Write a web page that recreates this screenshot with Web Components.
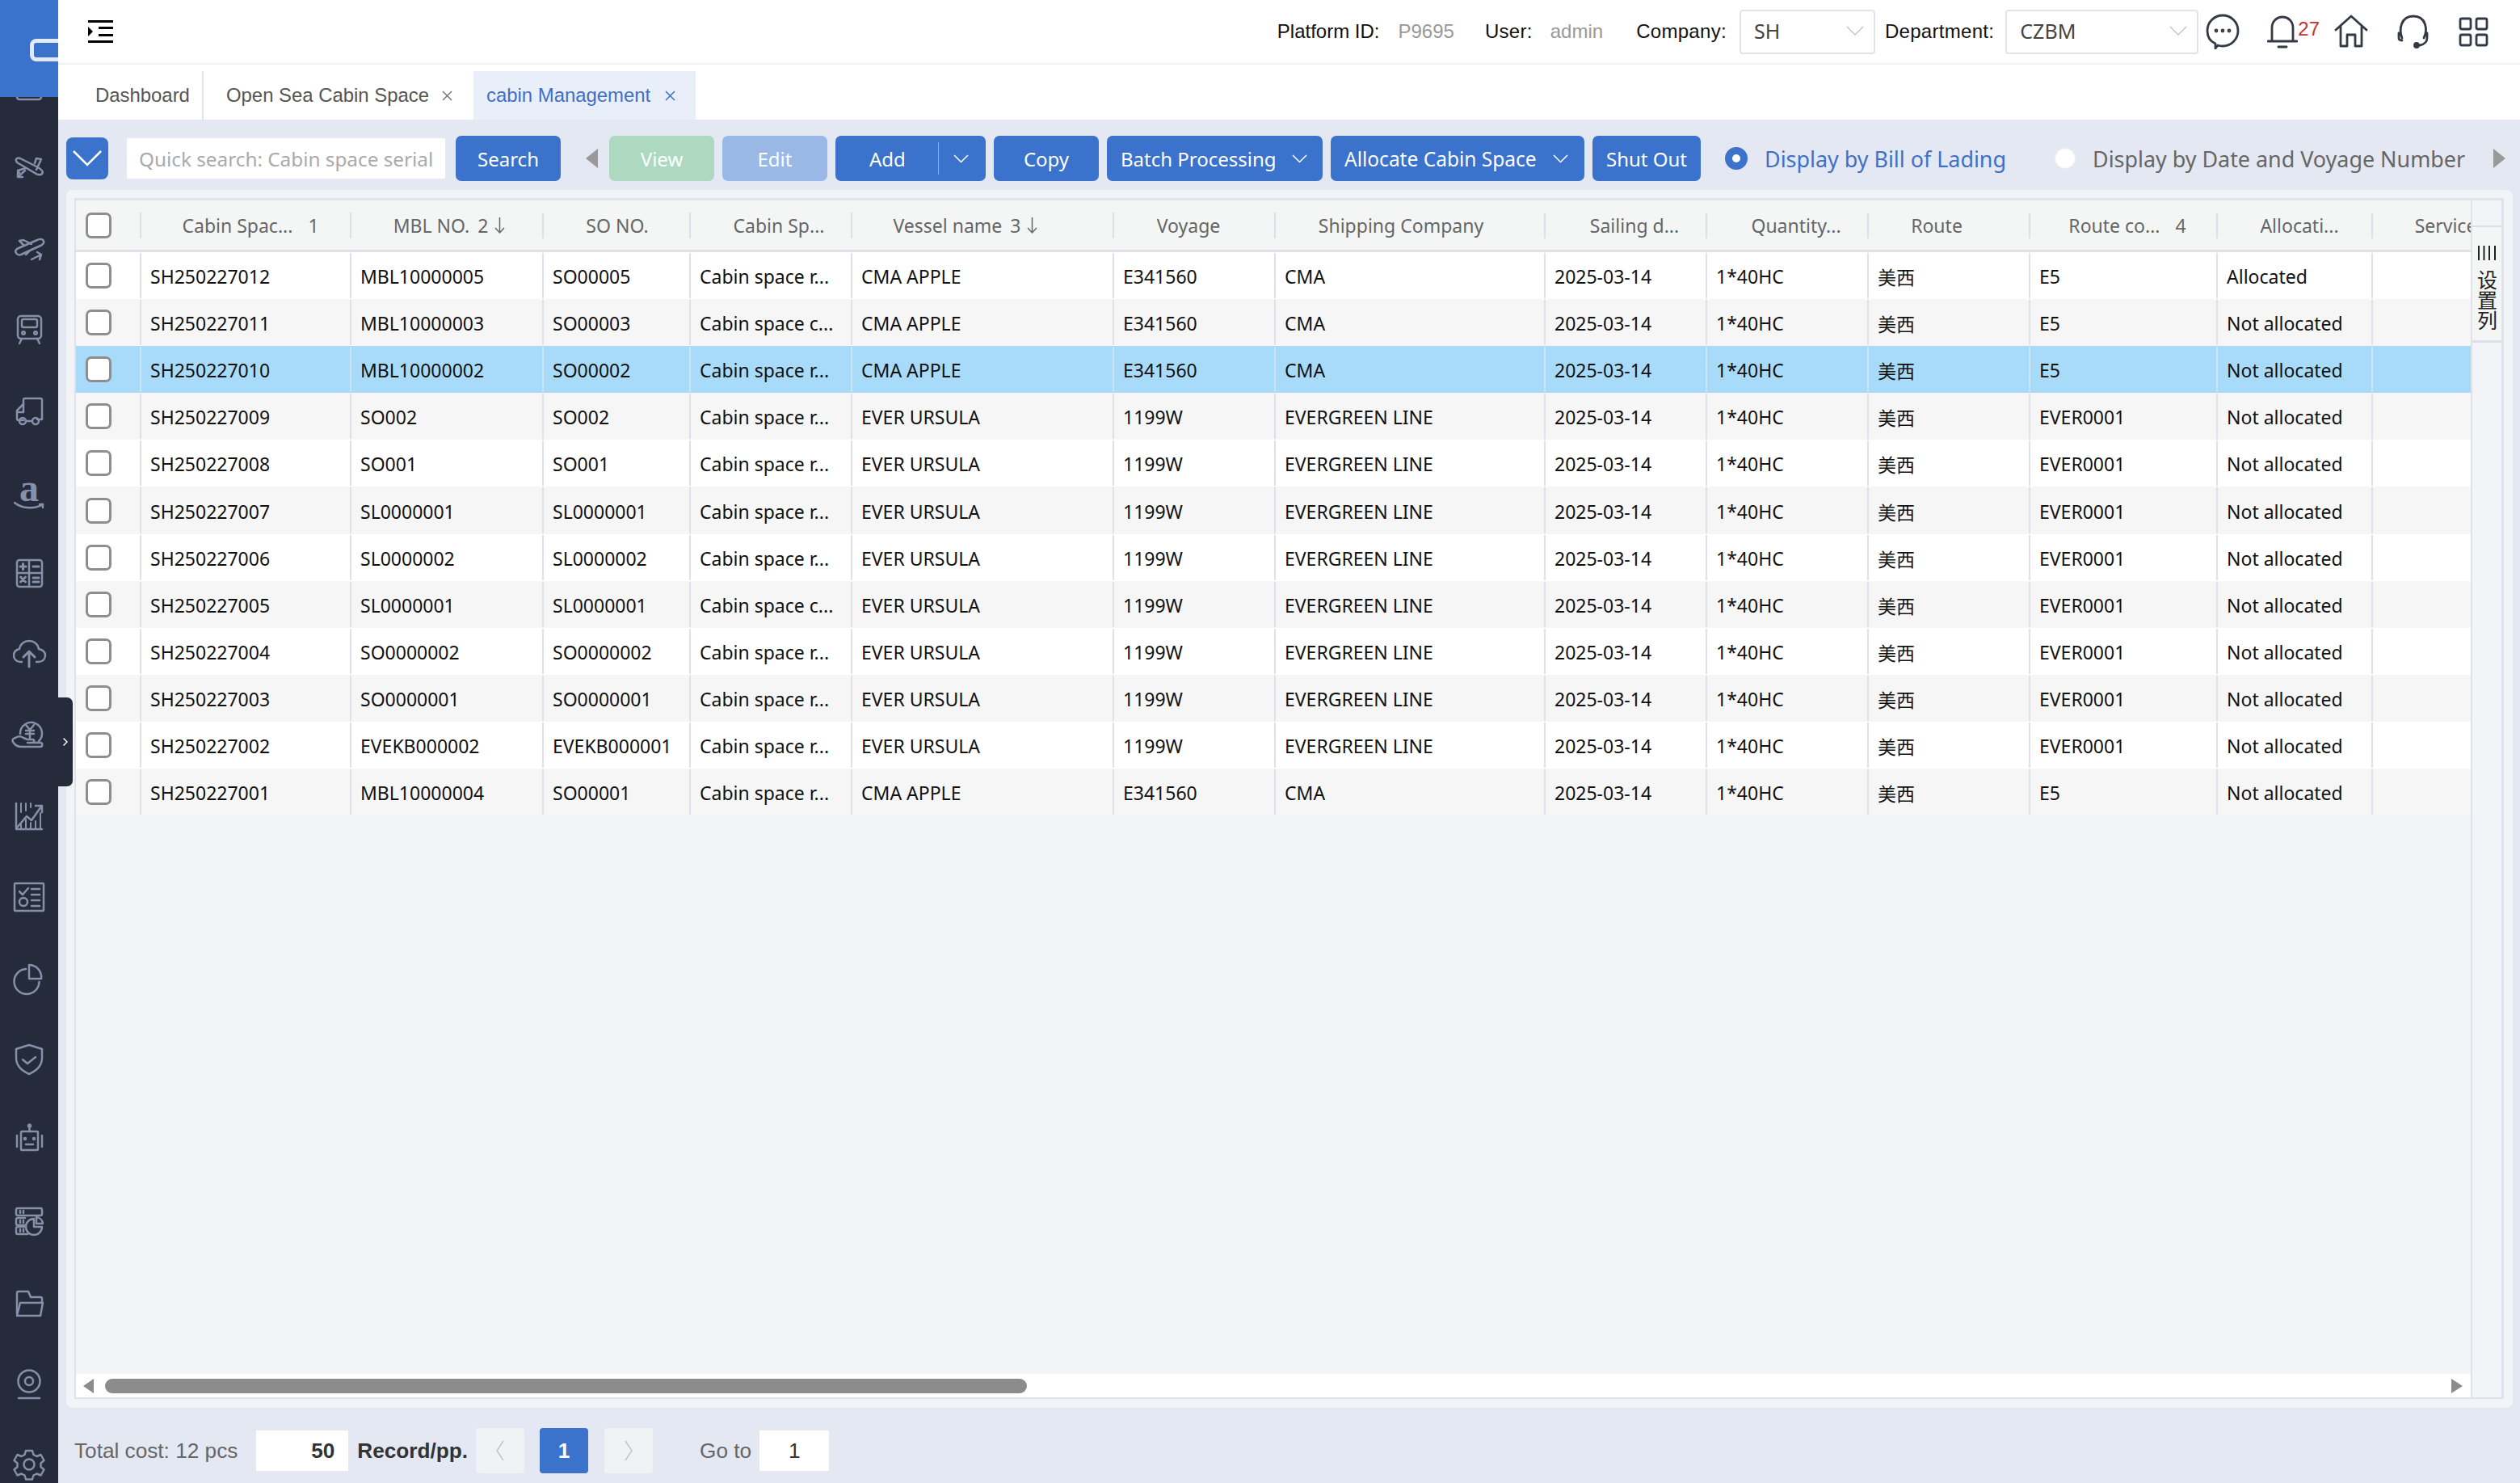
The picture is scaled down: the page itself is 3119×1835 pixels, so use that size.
<!DOCTYPE html>
<html>
<head>
<meta charset="utf-8">
<title>cabin Management</title>
<style>
html, body { margin: 0; height: 100%; overflow: hidden; }
body { font-family: "Noto Sans", "Noto Sans CJK SC", sans-serif; background: #e4e8f2; }
</style>
</head>
<body>
<app-shell>
    <side-nav slot="nav"></side-nav>
    <top-bar></top-bar>
    <tab-strip></tab-strip>
    <tool-bar></tool-bar>
    <data-grid></data-grid>
    <pager-bar></pager-bar>
</app-shell>

<script>
const ICONS = {
    box: '<rect x="9" y="14" width="30" height="26" rx="3"/><path d="M9 32h30"/>',
    planeBack: '<path d="M8 16c-1-3 2-4 5-3l22 11c5 3 7 6 5 8s-6 1-9-1l-22-13z"/><path d="M31 19l2-6 6 1-6 13M20 25l-10 3 2 3"/><path d="M10 36l9-8M10 36v-6M10 36h6"/>',
    planeOut: '<path d="M8 29c-2-2 0-5 3-6l23-10c4-2 7-1 8 1s-1 5-4 6l-24 11c-2 1-5 0-6-2z"/><path d="M17 19l-5-5 5-1 10 5M24 27l-4 4"/><path d="M27 37l12-6M39 31l-5-3M39 31l-2 6"/>',
    train: '<rect x="10" y="7" width="29" height="28" rx="4"/><rect x="15" y="11" width="19" height="10" rx="2"/><circle cx="17" cy="28" r="1.800"/><circle cx="32" cy="28" r="1.800"/><path d="M15 35l-3 6M34 35l3 6"/>',
    truck: '<path d="M17 36h-6a2 2 0 0 1-2-2v-10l8-8v-5a2 2 0 0 1 2-2h19a2 2 0 0 1 2 2v24h-6"/><path d="M9 26h8v-10"/><circle cx="16" cy="37" r="4"/><circle cx="32" cy="37" r="4"/><path d="M20 37h8"/>',
    calc: '<rect x="9" y="8" width="31" height="33" rx="3"/><path d="M24 8v33M9 24h31"/><path d="M13 16h7M16.500 12.500v7M29 16h7M13.500 29l6 6M19.500 29l-6 6M29 30h7M29 35h7" stroke-width="3"/>',
    cloud: '<path d="M15 34h-2c-5 0-8-4-8-8 0-4 3-7 7-8 1-6 6-10 12-10 6 0 11 4 12 10 5 1 8 4 8 8s-3 8-8 8h-3"/><path d="M24 40v-18M17 28l7-7 7 7" stroke-width="3"/>',
    yen: '<path d="M13 22a13.500 13.500 0 1 1 23 9"/><path d="M20 11l5 6 5-6M20 18h10M20 22h10M25 17v11"/><path d="M7 27c3-2 7-2 10 0l5 2h6c3 0 3 4 0 4h-6 16c3 0 3 5 0 5h-24c-5 0-8-3-10-6-1-2-1-4 3-5z"/>',
    chart: '<path d="M8 8v32h32"/><path d="M14 8v11M20 8v9M26 8v5M32 30v10M38 20v20M14 32v8M20 28v12M26 32v8" stroke-width="2"/><path d="M9 38l12-14 6 5 12-17M32 11h8v8"/>',
    list: '<rect x="6" y="7" width="36" height="34" rx="1"/><path d="M12 17l4 4 7-8M27 14h10M27 21h10M27 28h10M27 35h10"/><circle cx="17" cy="30" r="5"/>',
    pie: '<path d="M20 13a15.500 15.500 0 1 0 16.500 16"/><path d="M24 8a15 15 0 0 1 15 17h-15z"/>',
    shield: '<path d="M24 6l16 5v11c0 10-7 16-16 20-9-4-16-10-16-20v-11z"/><path d="M16 24l6 5 10-8"/>',
    robot: '<rect x="14" y="13" width="21" height="23" rx="1"/><path d="M24.500 6v7M9 18v14M40 18v14M20 29h9"/><circle cx="24.500" cy="6" r="1.500"/><circle cx="19" cy="22" r="1"/><circle cx="30" cy="22" r="1"/>',
    server: '<rect x="8" y="8" width="32" height="9" rx="2"/><path d="M19 20h-9a2 2 0 0 0-2 2v5a2 2 0 0 0 2 2h8M18 31h-8a2 2 0 0 0-2 2v5a2 2 0 0 0 2 2h12M13 11v3M17 11v3M13 23v3M17 23v3M13 34v3M17 34v3"/><path d="M30 21a10 10 0 1 0 10 10h-10z"/><path d="M33 19a9 9 0 0 1 8 8h-8z"/>',
    folder: '<path d="M9 38v-26a2 2 0 0 1 2-2h12l3 7h12a2 2 0 0 1 2 2v4"/><path d="M9 40l4-16h28l-3 16z"/>',
    cam: '<circle cx="24" cy="21" r="13.500"/><circle cx="24" cy="21" r="5"/><path d="M11 42h26"/>',
    gear: '<path d="M20 7h8l1.500 5 4 2 5-2 4 7-4 3.500v4.500l4 3.500-4 7-5-2-4 2-1.500 5h-8l-1.500-5-4-2-5 2-4-7 4-3.500v-4.500l-4-3.500 4-7 5 2 4-2z"/><circle cx="24" cy="24" r="6.500"/>'
};

// the amazon letter stays real text, so it is built apart from the others
const NAV = ['box', 'planeBack', 'planeOut', 'train', 'truck', 'amazon', 'calc', 'cloud', 'yen', 'chart', 'list', 'pie', 'shield', 'robot', 'server', 'folder', 'cam', 'gear'];

const COLUMNS = [260, 238, 182, 200, 324, 200, 334, 200, 200, 200, 232, 192, 200];
const GRID_TEMPLATE = '79px ' + COLUMNS.map(w => w + 'px').join(' ');

// label, order number, sorted, shift of the label off the centre of its cell
const HEADERS = [
    ['Cabin Spac...', '1', false, 7], ['MBL NO.', '2', true, 4], ['SO NO.', '', false, 2], ['Cabin Sp...', '', false, 11], ['Vessel name', '3', true, -20],
    ['Voyage', '', false, -6], ['Shipping Company', '', false, -10], ['Sailing d...', '', false, 12], ['Quantity...', '', false, 12], ['Route', '', false, -14], ['Route co...', '4', false, 6], ['Allocati...', '', false, 7], ['Service', '', false, -8]
];

const apple = ['CMA APPLE', 'E341560', 'CMA'];
const ursula = ['EVER URSULA', '1199W', 'EVERGREEN LINE'];
const RESERVED = 'Cabin space r...';
const OTHER = 'Cabin space c...';
const ROWS = [
    ['SH250227012', 'MBL10000005', 'SO00005', RESERVED, apple, 'E5', 'Allocated'],
    ['SH250227011', 'MBL10000003', 'SO00003', OTHER, apple, 'E5', 'Not allocated'],
    ['SH250227010', 'MBL10000002', 'SO00002', RESERVED, apple, 'E5', 'Not allocated'],
    ['SH250227009', 'SO002', 'SO002', RESERVED, ursula, 'EVER0001', 'Not allocated'],
    ['SH250227008', 'SO001', 'SO001', RESERVED, ursula, 'EVER0001', 'Not allocated'],
    ['SH250227007', 'SL0000001', 'SL0000001', RESERVED, ursula, 'EVER0001', 'Not allocated'],
    ['SH250227006', 'SL0000002', 'SL0000002', RESERVED, ursula, 'EVER0001', 'Not allocated'],
    ['SH250227005', 'SL0000001', 'SL0000001', OTHER, ursula, 'EVER0001', 'Not allocated'],
    ['SH250227004', 'SO0000002', 'SO0000002', RESERVED, ursula, 'EVER0001', 'Not allocated'],
    ['SH250227003', 'SO0000001', 'SO0000001', RESERVED, ursula, 'EVER0001', 'Not allocated'],
    ['SH250227002', 'EVEKB000002', 'EVEKB000001', RESERVED, ursula, 'EVER0001', 'Not allocated'],
    ['SH250227001', 'MBL10000004', 'SO00001', RESERVED, apple, 'E5', 'Not allocated']
];

class AppShell extends HTMLElement {
    constructor() {
        super();
        this.attachShadow({ mode: 'open' }).innerHTML = `
<style>
:host { display: flex; width: 3119px; height: 1835px; position: relative; overflow: hidden; }
.main { flex: 1; min-width: 0; display: flex; flex-direction: column; }
</style>
<slot name="nav"></slot>
<div class="main"><slot></slot></div>`;
    }
}

class SideNav extends HTMLElement {
    constructor() {
        super();
        const items = NAV.map(name => {
            if (name === 'amazon') {
                return `<div class="item"><span class="amazon">a<svg width="38" height="12" viewBox="0 0 38 12"><path d="M1 2c10 8 26 8 35 2M36 4l-4 0M36 4l0 4"/></svg></span></div>`;
            }
            return `<div class="item"><svg width="48" height="48" viewBox="0 0 48 48">${ICONS[name]}</svg></div>`;
        }).join('');
        this.attachShadow({ mode: 'open' }).innerHTML = `
<style>
:host { display: block; width: 72px; height: 100%; background: #252b3a; position: relative; flex: none; z-index: 2; }
.list { padding-top: 57px; }
.item { height: 100.300px; display: flex; align-items: center; justify-content: center; }
svg { fill: none; stroke: #8690a9; stroke-width: 2.500; stroke-linecap: round; stroke-linejoin: round; }
.amazon { position: relative; font: bold 48px/44px "Liberation Serif", serif; color: #8690a9; display: block; width: 38px; height: 48px; text-align: center; margin-top: -6px; }
.amazon svg { position: absolute; left: 0; top: 38px; }
.logo { position: absolute; left: 0; top: 0; width: 72px; height: 120px; background: #3b72cc; overflow: hidden; }
.logo i { position: absolute; left: 37px; top: 48px; width: 50px; height: 28px; border: 5px solid #e3eaf7; border-radius: 8px; box-sizing: border-box; }
.fold { position: absolute; left: 72px; top: 863px; width: 18px; height: 110px; background: #252b3a; border-radius: 0 7px 7px 0; display: flex; align-items: center; justify-content: center; }
.fold svg { stroke: #fff; stroke-width: 1.500; }
</style>
<div class="list">${items}</div>
<div class="logo"><i></i></div>
<div class="fold"><svg width="8" height="12" viewBox="0 0 8 12"><path d="M2 2l4 4-4 4"/></svg></div>`;
    }
}

class UiSelect extends HTMLElement {
    constructor() {
        super();
        this.attachShadow({ mode: 'open' }).innerHTML = `
<style>
:host { display: flex; align-items: center; height: 55px; box-sizing: border-box; border: 2px solid #e3e4e8; border-radius: 4px; background: #fff; padding: 0 12px 2px 16px; color: #444; font-size: 25px; justify-content: space-between; }
svg { fill: none; stroke: #c4c6cc; stroke-width: 1.500; }
</style>
<slot></slot>
<svg width="22" height="12" viewBox="0 0 22 12"><path d="M1 1l10 10 10-10"/></svg>`;
    }
}

class TopBar extends HTMLElement {
    constructor() {
        super();
        this.attachShadow({ mode: 'open' }).innerHTML = `
<style>
:host { display: flex; align-items: center; height: 80px; box-sizing: border-box; border-bottom: 2px solid #f0f0f2; background: #fff; flex: none; font: 24px "Liberation Sans", sans-serif; color: #111; padding-right: 39px; }
.menu { margin-left: 37px; margin-right: auto; display: block; }
.lab { white-space: nowrap; letter-spacing: .3px; }
.val { color: #999; white-space: nowrap; }
ui-select { font-family: "Noto Sans", sans-serif; }
.ico { fill: none; stroke: #333a45; stroke-width: 2.800; stroke-linecap: round; stroke-linejoin: round; display: block; }
.count { color: #c9302c; font-size: 24px; margin-bottom: 6px; }
</style>
<svg class="menu" width="31" height="28" viewBox="0 0 31 28"><path d="M0 0h31v3h-31zM0 25h31v3h-31zM13 8h18v3h-18zM13 17h18v3h-18zM0 8l6 6-6 6z" fill="#000"/></svg>
<span class="lab" style="letter-spacing:0">Platform ID:</span>
<span class="val" style="margin-left:23px">P9695</span>
<span class="lab" style="margin-left:38px">User:</span>
<span class="val" style="margin-left:22px">admin</span>
<span class="lab" style="margin-left:41px">Company:</span>
<ui-select style="margin-left:16px;width:168px">SH</ui-select>
<span class="lab" style="margin-left:12px">Department:</span>
<ui-select style="margin-left:14px;width:239px">CZBM</ui-select>
<svg class="ico" style="margin-left:9px" width="42" height="44" viewBox="0 0 42 44"><path d="M12 37c-7-3-10-9-10-16a19 19 0 1 1 19 19c-2 0-4 0-6-1l-3 4z"/><circle cx="13" cy="21" r="1" /><circle cx="21" cy="21" r="1"/><circle cx="29" cy="21" r="1"/></svg>
<svg class="ico" style="margin-left:34px" width="38" height="42" viewBox="0 0 38 42"><path d="M6 32v-16a13 13 0 0 1 26 0v16M1 33h36M14 40h10"/></svg>
<span class="count">27</span>
<svg class="ico" style="margin-left:18px" width="42" height="44" viewBox="0 0 42 44"><path d="M2 20l19-17 19 17M8 16v24h8v-14h10v14h8v-24"/></svg>
<svg class="ico" style="margin-left:35px" width="42" height="44" viewBox="0 0 42 44"><path d="M7 30c-4-10-2-27 14-27s18 17 13 27M3 24v6c0 2 2 3 4 3M38 24v6c0 4-3 8-9 9"/><circle cx="25" cy="39" r="2.500" fill="#333a45"/></svg>
<svg class="ico" style="margin-left:35px" width="37" height="37" viewBox="0 0 37 37"><rect x="2" y="2" width="13" height="13" rx="2"/><rect x="22" y="2" width="13" height="13" rx="2"/><rect x="2" y="22" width="13" height="13" rx="2"/><rect x="22" y="22" width="13" height="13" rx="2"/></svg>`;
    }
}

class TabStrip extends HTMLElement {
    constructor() {
        super();
        const x = '<svg width="13" height="13" viewBox="0 0 13 13"><path d="M1 1l11 11M12 1l-11 11"/></svg>';
        this.attachShadow({ mode: 'open' }).innerHTML = `
<style>
:host { display: flex; height: 68px; box-sizing: border-box; padding-top: 8px; background: #fff; flex: none; font: 23.900px "Liberation Sans", sans-serif; color: #555; }
.tab { display: flex; align-items: center; height: 60px; white-space: nowrap; }
.home { width: 180px; padding-left: 46px; box-sizing: border-box; border-right: 2px solid #e3e4e8; }
.sea { width: 334px; padding-left: 28px; box-sizing: border-box; gap: 16px; }
.on { width: 275px; padding-left: 16px; box-sizing: border-box; gap: 18px; background: #e9eff9; color: #3f70c6; }
svg { fill: none; stroke: #777; stroke-width: 1.500; }
.on svg { stroke: #3f70c6; }
</style>
<div class="tab home">Dashboard</div>
<div class="tab sea">Open Sea Cabin Space${x}</div>
<div class="tab on">cabin Management${x}</div>`;
    }
}

class ToolButton extends HTMLElement {
    constructor() {
        super();
        this.attachShadow({ mode: 'open' }).innerHTML = `
<style>
:host { display: inline-flex; align-items: center; justify-content: center; height: 56px; box-sizing: border-box; border-radius: 7px; background: #3b72cc; color: #fff; font-size: 24px; flex: none; white-space: nowrap; }
:host([tone=green]) { background: #aed9c1; }
:host([tone=pale]) { background: #99b8e6; }
</style>
<slot></slot>`;
    }
}

class RadioOption extends HTMLElement {
    constructor() {
        super();
        this.attachShadow({ mode: 'open' }).innerHTML = `
<style>
:host { display: inline-flex; align-items: center; gap: 21px; color: #666; font-size: 26.900px; white-space: nowrap; flex: none; }
:host([on]) { color: #3f70c6; }
i { width: 26px; height: 26px; border-radius: 50%; background: #fff; box-sizing: border-box; border: 1px solid #eceef3; }
:host([on]) i { width: 28px; height: 28px; border: 9px solid #3b72cc; }
</style>
<i></i><slot></slot>`;
    }
}

class ToolBar extends HTMLElement {
    constructor() {
        super();
        const caret = '<svg class="caret" width="19" height="11" viewBox="0 0 19 11"><path d="M1 1l8.500 8.500 8.500-8.500"/></svg>';
        this.attachShadow({ mode: 'open' }).innerHTML = `
<style>
:host { display: block; height: 87px; box-sizing: border-box; padding: 20px 0 0 10px; background: #e4e8f2; flex: none; overflow: hidden; }
.row { display: flex; align-items: center; height: 56px; }
.fold { width: 52px; height: 52px; border-radius: 8px; background: #3b72cc; display: flex; align-items: center; justify-content: center; flex: none; }
.fold svg { fill: none; stroke: #fff; stroke-width: 2.500; }
.search { width: 396px; height: 52px; margin: 0 12px 0 22px; box-sizing: border-box; background: #fff; border: 1px solid #e8e9ee; border-radius: 3px; color: #aaa; font-size: 24.300px; display: flex; align-items: center; padding-left: 15px; flex: none; white-space: nowrap; overflow: hidden; }
.arrow { flex: none; fill: #999; display: block; }
.caret { fill: none; stroke: #fff; stroke-width: 1.500; }
tool-button { margin-right: 10px; }
.split { width: 1px; height: 40px; background: #8fb0e0; margin-left: 40px; margin-right: 18px; }
</style>
<div class="row">
    <div class="fold"><svg width="38" height="22" viewBox="0 0 38 22"><path d="M2 2l17 17 17-17"/></svg></div>
    <div class="search">Quick search: Cabin space serial</div>
    <tool-button style="width:130px;margin-right:31px">Search</tool-button>
    <svg class="arrow" style="margin-right:14px" width="15" height="24" viewBox="0 0 15 24"><path d="M15 0v24l-15-12z"/></svg>
    <tool-button style="width:130px" tone="green">View</tool-button>
    <tool-button style="width:130px" tone="pale">Edit</tool-button>
    <tool-button style="width:186px;padding-left:42px;justify-content:flex-start">Add<span class="split"></span>${caret}</tool-button>
    <tool-button style="width:130px">Copy</tool-button>
    <tool-button style="width:267px;padding-left:17px;justify-content:flex-start">Batch Processing<span style="width:19px"></span>${caret}</tool-button>
    <tool-button style="width:314px;padding-left:17px;justify-content:flex-start;font-size:24.500px">Allocate Cabin Space<span style="width:20px"></span>${caret}</tool-button>
    <tool-button style="width:134px;margin-right:30px">Shut Out</tool-button>
    <radio-option on style="margin-right:60px">Display by Bill of Lading</radio-option>
    <radio-option style="margin-right:35px">Display by Date and Voyage Number</radio-option>
    <svg class="arrow" width="15" height="24" viewBox="0 0 15 24"><path d="M0 0v24l15-12z"/></svg>
</div>`;
    }
}

class DataGrid extends HTMLElement {
    constructor() {
        super();
        const check = '<span class="check"></span>';
        const head = HEADERS.map(([label, num, sorted, shift]) => {
            const pad = shift > 0 ? `padding-left:${shift * 2}px` : `padding-right:${-shift * 2}px`;
            const order = num ? `<span class="${sorted ? 'num near' : 'num'}">${num}</span>` : '';
            const arrow = sorted ? '<svg class="sort" width="13" height="22" viewBox="0 0 13 22"><path d="M6.500 1v19M1 14l5.500 6 5.500-6"/></svg>' : '';
            return `<div class="th" style="${pad}"><span>${label}</span>${order}${arrow}</div>`;
        }).join('');
        const rows = ROWS.map((r, i) => {
            const cells = [r[0], r[1], r[2], r[3], r[4][0], r[4][1], r[4][2], '2025-03-14', '1*40HC', '美西', r[5], r[6], ''];
            const cls = i === 2 ? 'row picked' : (i % 2 ? 'row alt' : 'row');
            return `<div class="${cls}"><div class="box">${check}</div>${cells.map(c => `<div class="td">${c}</div>`).join('')}</div>`;
        }).join('');
        this.attachShadow({ mode: 'open' }).innerHTML = `
<style>
:host { display: block; flex: 1; min-height: 0; margin: 0 9px 0 10px; padding: 10px 11px 11px 10px; background: #f2f4f8; border-radius: 8px; }
.frame { display: flex; height: 100%; box-sizing: border-box; border: 3px solid #dfe2e8; border-left-width: 2px; border-bottom-width: 2px; }
.scroll { flex: none; width: 2964px; display: flex; flex-direction: column; overflow: hidden; }
.head, .row { display: grid; grid-template-columns: ${GRID_TEMPLATE}; flex: none; width: max-content; }
.head { height: 64px; box-sizing: border-box; border-bottom: 3px solid #dfe2e8; background: #f4f6f6; color: #666; }
.row { height: 58.100px; background: #fff; color: #111; --rule: #dfe1e6; }
.alt { background: #f6f6f7; }
.picked { background: #a8daf9; --rule: #cde3f3; }
.box { display: flex; align-items: center; padding-left: 12px; }
.check { display: block; width: 32px; height: 32px; box-sizing: border-box; border: 3px solid #8e8e8e; border-radius: 7px; background: #fff; }
.th { display: flex; align-items: center; justify-content: center; box-sizing: border-box; gap: 8px; white-space: nowrap; font-size: 23px; background: linear-gradient(#dcdfe4, #dcdfe4) 0 50% / 2px 32px no-repeat; overflow: hidden; }
.num { margin-left: 11px; }
.num.near { margin-left: 2px; }
.sort { fill: none; stroke: #666; stroke-width: 1.500; }
.td { display: flex; align-items: center; padding: 2px 0 0 13px; font-size: 23px; white-space: nowrap; overflow: hidden; background: linear-gradient(var(--rule), var(--rule)) 0 1px / 2px calc(100% - 2px) no-repeat; }
.fill { flex: 1; }
.bar { flex: none; height: 29px; background: #fff; position: relative; }
.bar .thumb { position: absolute; left: 36px; top: 6px; width: 1141px; height: 18px; border-radius: 9px; background: #8c8c8c; }
.bar svg { position: absolute; top: 6px; fill: #8c8c8c; }
.rail { flex: 1; border-left: 2px solid #dfe2e8; padding-top: 31px; }
.btn { height: 145px; box-sizing: border-box; border-top: 2px solid #dcdfe4; border-bottom: 3px solid #dcdfe4; display: flex; flex-direction: column; align-items: center; padding: 23px 0 0 0; background: #f4f6f6; color: #222; }
.words { writing-mode: vertical-rl; font-size: 25px; line-height: 25px; margin-top: 12px; font-family: "Noto Sans CJK SC", sans-serif; }
.bars { fill: #222; display: block; }
</style>
<div class="frame">
    <div class="scroll">
        <div class="head"><div class="box">${check}</div>${head}</div>
        ${rows}
        <div class="fill"></div>
        <div class="bar">
            <svg style="left:9px" width="13" height="18" viewBox="0 0 13 18"><path d="M13 0v18l-13-9z"/></svg>
            <div class="thumb"></div>
            <svg style="right:10px" width="14" height="18" viewBox="0 0 14 18"><path d="M0 0v18l14-9z"/></svg>
        </div>
    </div>
    <div class="rail">
        <div class="btn">
            <svg class="bars" width="22" height="18" viewBox="0 0 22 18"><path d="M0 0h2v18h-2zM6.500 0h2v18h-2zM13 0h2v18h-2zM20 0h2v18h-2z"/></svg>
            <div class="words">设置列</div>
        </div>
    </div>
</div>`;
    }
}

class PagerBar extends HTMLElement {
    constructor() {
        super();
        this.attachShadow({ mode: 'open' }).innerHTML = `
<style>
:host { display: flex; align-items: center; height: 93px; box-sizing: border-box; flex: none; padding: 13px 0 0 20px; font: 26.200px "Liberation Sans", sans-serif; color: #666; white-space: nowrap; }
.num { height: 54px; box-sizing: border-box; background: #fff; border: 2px solid #e6e8ee; border-radius: 3px; display: flex; align-items: center; color: #333; }
.pg { width: 60px; height: 56px; border-radius: 4px; background: #f1f2f4; display: flex; align-items: center; justify-content: center; }
.pg svg { fill: none; stroke: #c2c4c8; stroke-width: 1.500; }
.cur { background: #3b72cc; color: #fff; font-weight: bold; }
b { color: #333; }
</style>
<span>Total cost: 12 pcs</span>
<span class="num" style="width:118px;margin-left:21px;justify-content:flex-end;padding-right:17px;font-weight:bold">50</span>
<b style="margin-left:9px">Record/pp.</b>
<span class="pg" style="margin-left:10px"><svg width="10" height="26" viewBox="0 0 10 26"><path d="M9 1l-8 12 8 12"/></svg></span>
<span class="pg cur" style="margin-left:19px">1</span>
<span class="pg" style="margin-left:20px"><svg width="10" height="26" viewBox="0 0 10 26"><path d="M1 1l8 12-8 12"/></svg></span>
<span style="margin-left:58px">Go to</span>
<span class="num" style="width:90px;margin-left:8px;justify-content:center">1</span>`;
    }
}

customElements.define('app-shell', AppShell);
customElements.define('side-nav', SideNav);
customElements.define('ui-select', UiSelect);
customElements.define('top-bar', TopBar);
customElements.define('tab-strip', TabStrip);
customElements.define('tool-button', ToolButton);
customElements.define('radio-option', RadioOption);
customElements.define('tool-bar', ToolBar);
customElements.define('data-grid', DataGrid);
customElements.define('pager-bar', PagerBar);
</script>
</body>
</html>
